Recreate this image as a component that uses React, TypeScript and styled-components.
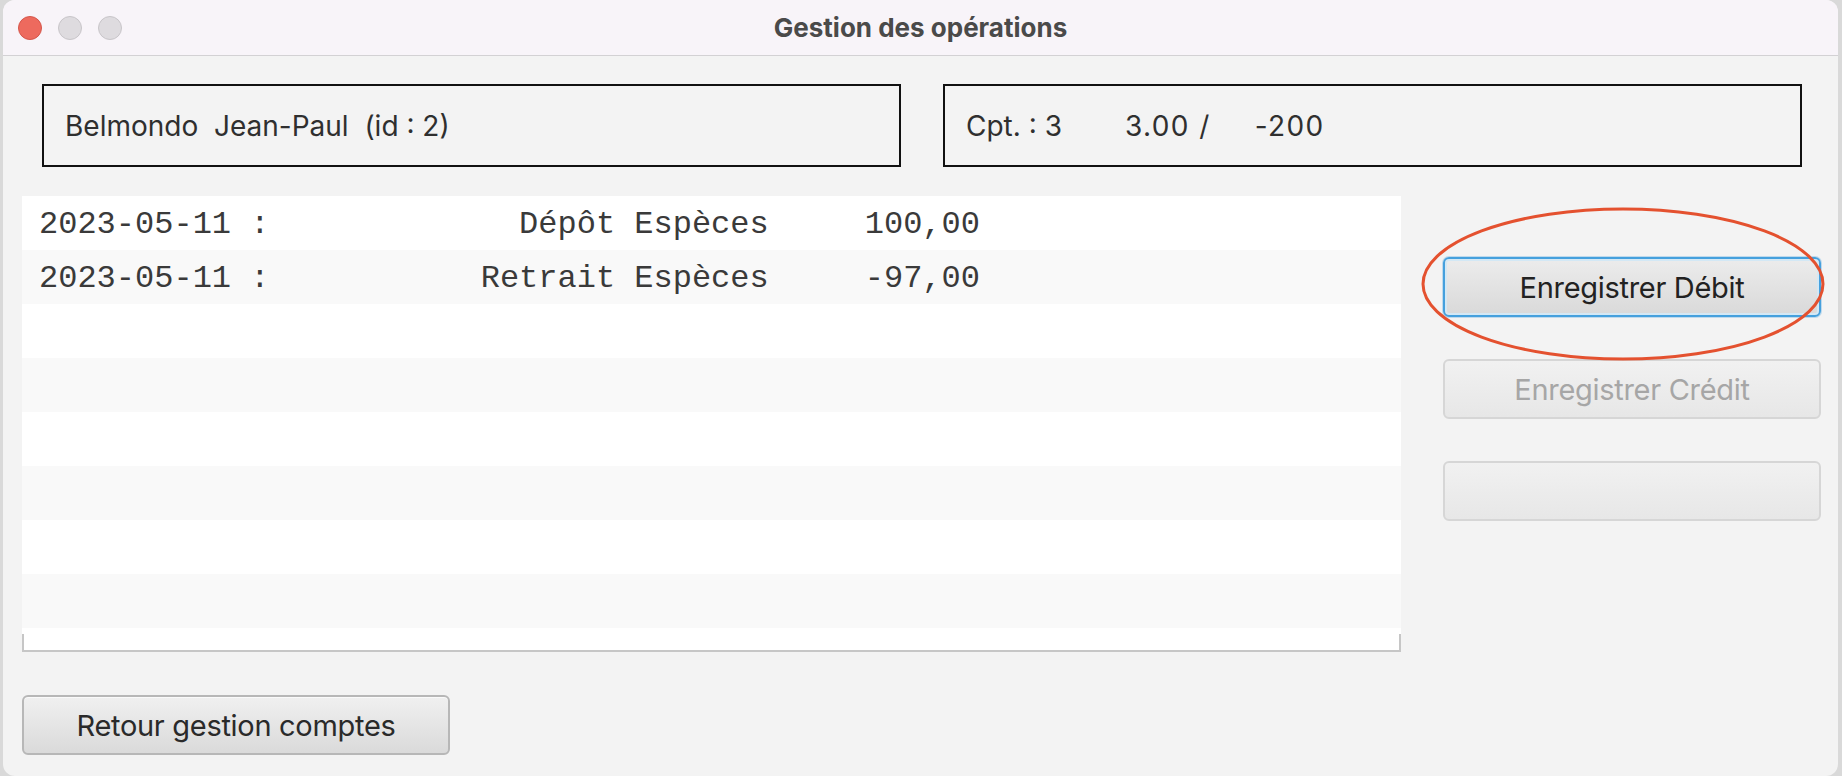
import React from "react";
import styled, { createGlobalStyle, css } from "styled-components";

const GlobalStyle = createGlobalStyle`
  html, body {
    margin: 0;
    padding: 0;
    background: #d9d9d9;
    overflow: hidden;
  }
  * { box-sizing: border-box; }
`;

const UI_FONT = `"Inter", "Roboto", "Liberation Sans", sans-serif`;

const Window = styled.div`
  position: relative;
  margin-left: 3px;
  width: 1835px;
  height: 776px;
  border-radius: 12px;
  overflow: hidden;
  background: #f3f3f3;
  display: flex;
  flex-direction: column;
  font-family: ${UI_FONT};
`;

const TitleBar = styled.div`
  height: 56px;
  flex: none;
  background: #f8f4f9;
  border-bottom: 1px solid #d3d1d4;
  display: grid;
  grid-template-columns: 1fr auto 1fr;
  align-items: center;
`;

const Lights = styled.div`
  display: flex;
  gap: 16px;
  padding-left: 15px;
`;

const Light = styled.span<{ $red?: boolean }>`
  width: 24px;
  height: 24px;
  border-radius: 50%;
  background: ${(p) => (p.$red ? "#ed6a5e" : "#dedbdf")};
  border: 1px solid ${(p) => (p.$red ? "#d5564b" : "#c8c5c9")};
`;

const Title = styled.div`
  font-weight: 700;
  font-size: 26px;
  color: #4a4a4a;
`;

const Content = styled.div`
  flex: 1;
  display: flex;
  flex-direction: column;
  padding: 28px 17px 21px 19px;
`;

const InfoRow = styled.div`
  display: flex;
  gap: 42px;
  padding: 0 19px 0 20px;
`;

const InfoBox = styled.div`
  flex: 1;
  height: 83px;
  border: 2px solid #111;
  display: flex;
  align-items: center;
  padding-left: 21px;
  font-size: 28px;
  color: #2f2f2f;
  white-space: pre;
`;

const Account = styled.span<{ $gap?: number; $spread?: boolean }>`
  margin-left: ${(p) => p.$gap ?? 0}px;
  letter-spacing: ${(p) => (p.$spread ? "1.4px" : "0")};
`;

const Middle = styled.div`
  display: flex;
  gap: 42px;
  margin-top: 29px;
`;

const List = styled.div`
  flex: 1;
  background: #fff;
  display: flex;
  flex-direction: column;
`;

const Row = styled.div<{ $odd: boolean }>`
  height: 54px;
  line-height: 50px;
  padding: 4px 0 0 17px;
  background: ${(p) => (p.$odd ? "#f9f9f9" : "#ffffff")};
  font-family: "Liberation Mono", "Courier New", monospace;
  font-size: 32px;
  color: #3a3a3a;
  white-space: pre;
`;

const ListFoot = styled.div`
  height: 24px;
  padding-top: 6px;
  background: #fff;
`;

const ListFootEdge = styled.div`
  height: 100%;
  border: 2px solid #c6c6c6;
  border-top: none;
`;

const ButtonColumn = styled.div`
  width: 378px;
  display: flex;
  flex-direction: column;
  gap: 42px;
  padding-top: 61px;
`;

const Button = styled.button<{ $focused?: boolean; $width?: number }>`
  height: 60px;
  width: ${(p) => (p.$width ? `${p.$width}px` : "100%")};
  border-radius: 6px;
  border: 2px solid #b7b7b7;
  background: linear-gradient(#f0f0f0, #dadada);
  box-shadow: inset 0 1px 0 #fafafa;
  font-family: ${UI_FONT};
  font-size: 29px;
  color: #2a2a2a;
  padding: 0;
  letter-spacing: -0.3px;
  ${(p) =>
    p.$focused &&
    css`
      border: 2px solid #45a0dd;
      background: linear-gradient(#ececec, #d9d9d9);
      box-shadow: inset 0 0 0 2px #d3e8f5, 0 0 0 1px rgba(69, 160, 221, 0.3);
      color: #222;
    `}
  &:disabled {
    color: #a6a6a6;
    border-color: #d6d6d6;
    background: linear-gradient(#f1f1f1, #e7e7e7);
    box-shadow: none;
  }
`;

const Bottom = styled.div`
  margin-top: auto;
  display: flex;
`;

const Annotation = styled.svg`
  position: absolute;
  left: 1415px;
  top: 203px;
  overflow: visible;
  pointer-events: none;
`;

const pad = (s: string, n: number) => s.padStart(n, " ");

const ops = [
  { date: "2023-05-11", label: "Dépôt Espèces", amount: "100,00" },
  { date: "2023-05-11", label: "Retrait Espèces", amount: "-97,00" },
];

export default function App() {
  const rows = Array.from({ length: 8 }, (_, i) => {
    const op = ops[i];
    return op ? `${op.date} : ${pad(op.label, 25)} ${pad(op.amount, 10)}` : " ";
  });
  return (
    <>
      <GlobalStyle />
      <Window>
        <TitleBar>
          <Lights>
            <Light $red />
            <Light />
            <Light />
          </Lights>
          <Title>Gestion des opérations</Title>
          <div />
        </TitleBar>
        <Content>
          <InfoRow>
            <InfoBox>Belmondo  Jean-Paul  (id : 2)</InfoBox>
            <InfoBox>
              <Account>Cpt. : 3</Account>
              <Account $gap={63} $spread>3.00 /</Account>
              <Account $gap={44} $spread>-200</Account>
            </InfoBox>
          </InfoRow>
          <Middle>
            <List>
              {rows.map((r, i) => (
                <Row key={i} $odd={i % 2 === 1}>
                  {r}
                </Row>
              ))}
              <ListFoot>
                <ListFootEdge />
              </ListFoot>
            </List>
            <ButtonColumn>
              <Button $focused>Enregistrer Débit</Button>
              <Button disabled>Enregistrer Crédit</Button>
              <Button disabled />
            </ButtonColumn>
          </Middle>
          <Bottom>
            <Button $width={428}>Retour gestion comptes</Button>
          </Bottom>
        </Content>
        <Annotation width="410" height="160" viewBox="0 0 410 160">
          <ellipse cx="205" cy="81" rx="200" ry="75" fill="none" stroke="#e4512f" strokeWidth="3" />
        </Annotation>
      </Window>
    </>
  );
}
